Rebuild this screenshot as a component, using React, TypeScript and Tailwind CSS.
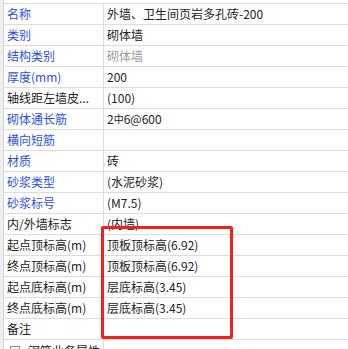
import React from "react";

type Row = {
  label: string;
  value: string;
  blue?: boolean;
  muted?: boolean;
  rebar?: boolean;
};

const rows: Row[] = [
  { label: "名称", value: "外墙、卫生间页岩多孔砖-200", blue: true },
  { label: "类别", value: "砌体墙", blue: true },
  { label: "结构类别", value: "砌体墙", blue: true, muted: true },
  { label: "厚度(mm)", value: "200", blue: true },
  { label: "轴线距左墙皮...", value: "(100)" },
  { label: "砌体通长筋", value: "", blue: true, rebar: true },
  { label: "横向短筋", value: "", blue: true },
  { label: "材质", value: "砖", blue: true },
  { label: "砂浆类型", value: "(水泥砂浆)", blue: true },
  { label: "砂浆标号", value: "(M7.5)", blue: true },
  { label: "内/外墙标志", value: "(内墙)" },
  { label: "起点顶标高(m)", value: "顶板顶标高(6.92)" },
  { label: "终点顶标高(m)", value: "顶板顶标高(6.92)" },
  { label: "起点底标高(m)", value: "层底标高(3.45)" },
  { label: "终点底标高(m)", value: "层底标高(3.45)" },
  { label: "备注", value: "" },
];

const PropRow = ({ row }: { row: Row }) => {
  return (
    <div className="flex h-[21px] border-b border-[#dcdcdc]">
      <div
        className={`flex w-[100px] shrink-0 items-center pl-[3px] border-r border-[#dcdcdc] whitespace-nowrap overflow-hidden ${
          row.blue ? "text-[#2a4fe6]" : "text-[#222]"
        }`}
      >
        {row.label}
      </div>
      <div
        className={`flex flex-1 items-center pl-[3px] whitespace-nowrap ${
          row.muted ? "text-[#9a9a9a]" : "text-[#222]"
        }`}
      >
        {row.rebar ? (
          <span>
            2<span className="text-[10px] align-[1px]">中</span>6@600
          </span>
        ) : (
          row.value
        )}
      </div>
    </div>
  );
};

export default function App() {
  return (
    <div
      className="relative w-[348px] h-[349px] overflow-hidden bg-white text-[12px] leading-none"
      style={{ fontFamily: '"Noto Sans CJK SC", "Noto Sans", sans-serif' }}
    >
      <div className="flex h-full">
        {/* left gutter */}
        <div className="w-[3px] shrink-0 bg-[#efefef] border-r border-[#d4d4d4] box-content" />
        <div className="flex-1 pt-[3px]">
          <div className="border-t border-[#dcdcdc]">
            {rows.map((row, i) => (
              <PropRow key={i} row={row} />
            ))}
          </div>
          {/* group row */}
          <div className="flex h-[21px] items-center">
            <div className="flex w-[100px] items-center gap-[8px] pl-[6px] border-r border-[#dcdcdc] h-full text-[#222] whitespace-nowrap">
              <span className="flex h-[10px] w-[10px] shrink-0 items-center justify-center border border-[#8a8a8a] text-[9px] text-[#444]">
                +
              </span>
              <span>钢筋业务属性</span>
            </div>
          </div>
        </div>
      </div>

      {/* highlight box */}
      <div className="absolute left-[101px] top-[226px] w-[132px] h-[113px] border-[3px] border-[#f5201c] rounded-[2px]" />
    </div>
  );
}
